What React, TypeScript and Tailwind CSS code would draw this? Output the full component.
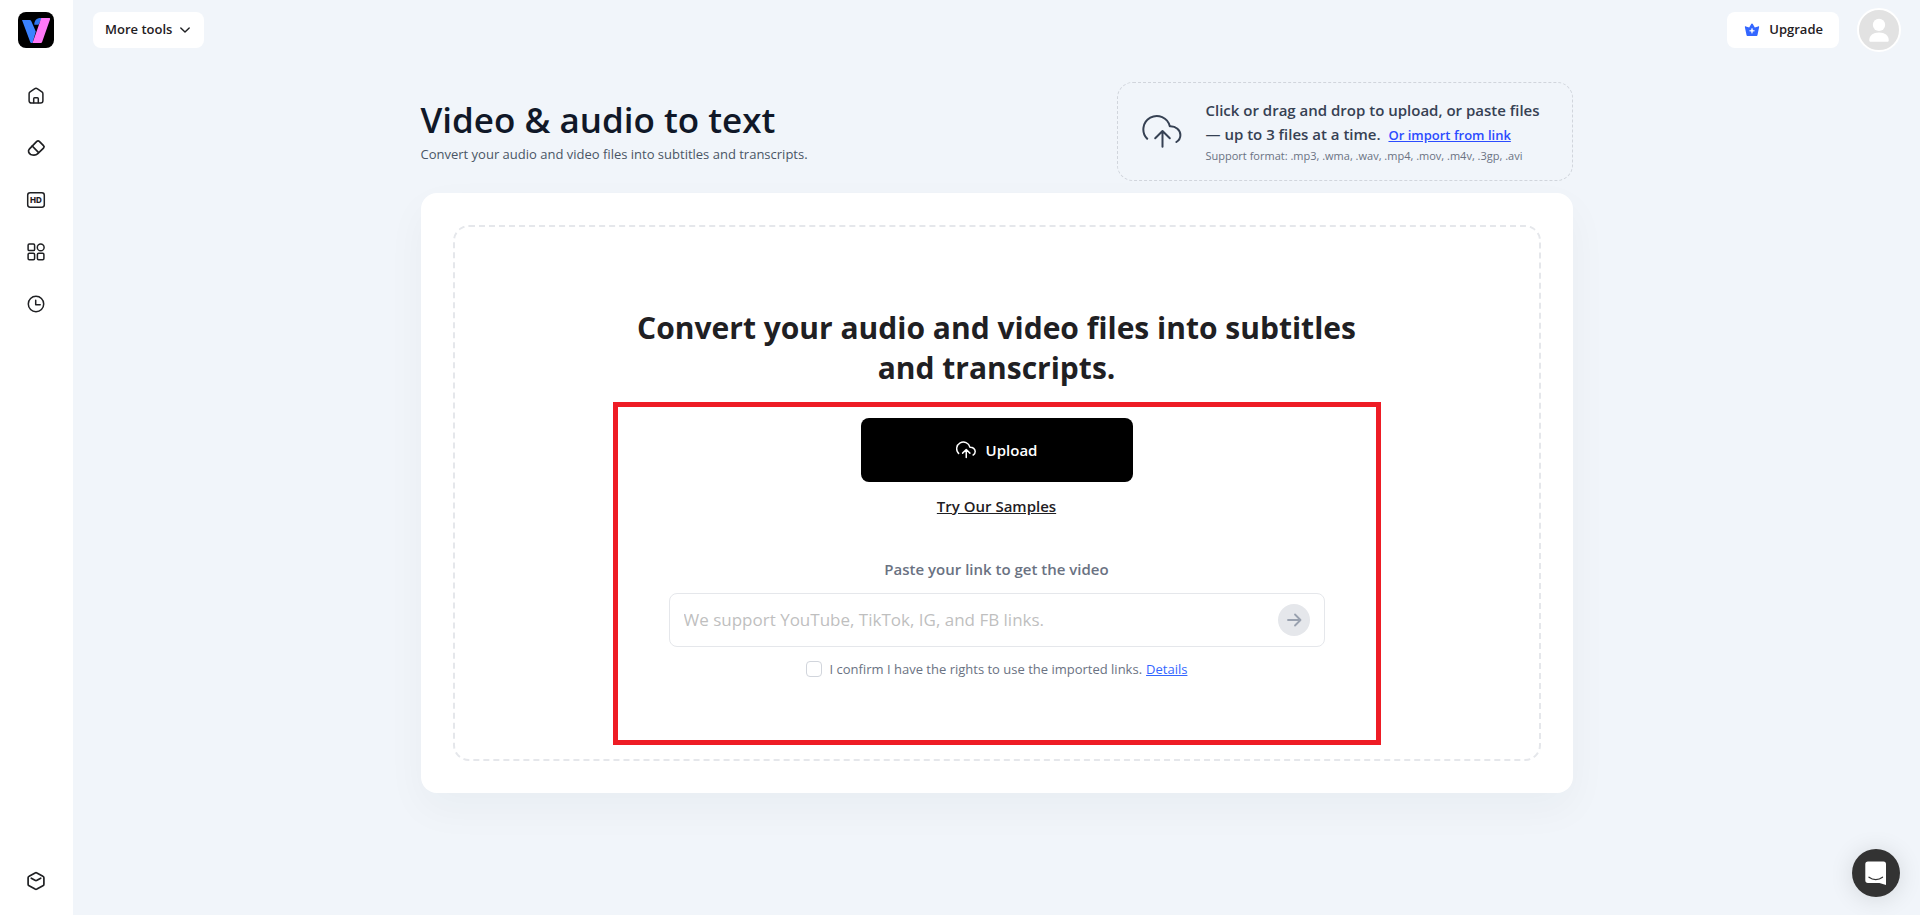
import type { ReactNode } from "react";

function Icon({ children, className = "size-5" }: { children: ReactNode; className?: string }) {
  return (
    <svg
      viewBox="0 0 20 20"
      fill="none"
      stroke="currentColor"
      strokeWidth="1.5"
      strokeLinecap="round"
      strokeLinejoin="round"
      className={className}
      aria-hidden="true"
    >
      {children}
    </svg>
  );
}

function CloudUpload({ className, stroke }: { className: string; stroke: number }) {
  return (
    <svg
      viewBox="0 0 40 40"
      fill="none"
      stroke="currentColor"
      strokeWidth={stroke}
      strokeLinecap="round"
      strokeLinejoin="round"
      className={className}
      aria-hidden="true"
    >
      <path d="M5.2 26.8A13.4 13.4 0 1 1 27.8 14.3C34 14 38.4 18 38.4 23C38.4 26 37 28.4 34.4 30" />
      <path d="M20.5 34.8V19M13.2 26.3l7.3-7.3 7.3 7.3" />
    </svg>
  );
}

function Logo() {
  return (
    <svg viewBox="0 0 36 36" className="size-9" aria-hidden="true">
      <rect width="36" height="36" rx="8" fill="#000" />
      <path d="M4 8h7.6c.8 0 1.3.3 1.6 1l4.6 10.5L14.5 31h-1.2c-.5 0-.8-.3-1-.7z" fill="#3b82ff" />
      <path d="M24 6.1 20.5 12.8h-4.2c0-4 2.2-6.7 6.4-6.7z" fill="#2f74f0" />
      <path d="M23.3 6H31c1 0 1.4.6 1 1.5l-7.8 22.3c-.3.8-.8 1.2-1.7 1.2h-8z" fill="#ff78f8" />
    </svg>
  );
}

const NAV = [
  {
    label: "Home",
    icon: (
      <>
        <path d="M3.1 7.8c0-.8.3-1.4 1-1.9l4.4-3.1c.9-.6 2.1-.6 3 0l4.4 3.1c.7.5 1 1.1 1 1.9v6.9c0 1.4-.9 2.3-2.3 2.3H5.4c-1.4 0-2.3-.9-2.3-2.3z" />
        <path d="M7.7 16.8v-4.1c0-.6.3-.9.9-.9h2.8c.6 0 .9.3.9.9v4.1" />
      </>
    ),
  },
  {
    label: "Eraser",
    icon: (
      <>
        <path
          d="M10.8 3.4c.8-.8 1.8-.8 2.5 0l4.2 4.2c.8.8.8 1.7 0 2.5l-5.7 5.5c-1.9 1.9-5.1 1.6-7.1.9-1.9-1-3.2-3.6-1.2-5.6z"
          strokeWidth="1.7"
        />
        <path d="m6.2 8 6.2 6.4" strokeWidth="1.7" />
      </>
    ),
  },
  {
    label: "HD enhance",
    icon: (
      <>
        <rect x="1.7" y="2.8" width="16.6" height="14.4" rx="2.4" />
        <text
          x="10"
          y="12.8"
          textAnchor="middle"
          fontSize="8"
          fontWeight="800"
          fill="currentColor"
          stroke="none"
          fontFamily="Inter, sans-serif"
        >
          HD
        </text>
      </>
    ),
  },
  {
    label: "All tools",
    icon: (
      <>
        <rect x="2.1" y="2.1" width="6.5" height="6.5" rx="1.2" />
        <circle cx="14.7" cy="5.4" r="3.4" />
        <rect x="2.1" y="11.3" width="6.5" height="6.5" rx="1.2" />
        <rect x="11.4" y="11.3" width="6.5" height="6.5" rx="1.2" />
      </>
    ),
  },
  {
    label: "History",
    icon: (
      <>
        <circle cx="10" cy="10" r="7.7" />
        <path d="M9.7 6.2v4.5h4.5" />
      </>
    ),
  },
];

function Sidebar() {
  return (
    <aside className="flex w-[73px] shrink-0 flex-col items-center bg-white pt-3 pr-px pb-6 text-[#1f2023]">
      <a href="#" aria-label="Dashboard">
        <Logo />
      </a>
      <nav className="mt-[38px] flex flex-col gap-8">
        {NAV.map((item) => (
          <a key={item.label} href="#" aria-label={item.label}>
            <Icon>{item.icon}</Icon>
          </a>
        ))}
      </nav>
      <a href="#" aria-label="Assets" className="mt-auto">
        <Icon>
          <path
            d="M9.1 1.9c.6-.3 1.2-.3 1.8 0l6 3.3c.6.3 1 .9 1 1.6v6.4c0 .7-.4 1.3-1 1.6l-6 3.3c-.6.3-1.2.3-1.8 0l-6-3.3c-.6-.3-1-.9-1-1.6V6.8c0-.7.4-1.3 1-1.6z"
            strokeWidth="1.7"
          />
          <path d="M5.3 7.2 9 9.3c.7.4 1.3.4 2 0l3.7-2.1" strokeWidth="1.7" />
        </Icon>
      </a>
    </aside>
  );
}

function TopBar() {
  return (
    <header className="flex items-center justify-between pt-2 pr-[19px] pl-5">
      <button className="flex h-9 items-center gap-1.5 rounded-lg bg-white px-3 text-[13px] font-semibold">
        More tools
        <Icon className="size-3.5">
          <path d="m4 7 6 6 6-6" strokeWidth="2" />
        </Icon>
      </button>
      <div className="flex items-center gap-[18px]">
        <button className="flex h-9 items-center gap-2 rounded-lg bg-white px-4 text-[13px] font-semibold">
          <svg viewBox="0 0 18 18" className="size-[18px]" aria-hidden="true">
            <path
              d="M9 2.4c.4 0 .6.2.8.6l2 3.5 3.3-1.1c.8-.2 1.2.2 1 .9l-1.6 7.7c-.1.7-.6 1-1.2 1H4.7c-.6 0-1.1-.3-1.2-1L1.9 6.3c-.2-.7.2-1.1 1-.9l3.3 1.1 2-3.5c.2-.4.4-.6.8-.6z"
              fill="#3366ff"
            />
            <path
              d="M9 7.2c.4 1.7.9 2.2 2.6 2.6C9.9 10.2 9.4 10.7 9 12.4c-.4-1.7-.9-2.2-2.6-2.6C8.1 9.4 8.6 8.9 9 7.2z"
              fill="#fff"
              stroke="#fff"
              strokeWidth="0.5"
            />
          </svg>
          Upgrade
        </button>
        <button aria-label="Account" className="size-11 overflow-hidden rounded-full border-2 border-white bg-[#e2e2e2]">
          <svg viewBox="0 0 39 39" className="size-full" fill="#fff" aria-hidden="true">
            <circle cx="19.5" cy="14.5" r="6" />
            <path d="M10 29.5c0-4.7 3.8-7.5 9.5-7.5s9.5 2.8 9.5 7.5c0 1-.6 1.5-1.5 1.5h-16c-.9 0-1.5-.5-1.5-1.5z" />
          </svg>
        </button>
      </div>
    </header>
  );
}

function DropBox() {
  return (
    <div className="flex w-[456px] items-center rounded-2xl border border-dashed border-gray-300 py-[15px] pr-4 pl-6 text-gray-700">
      <CloudUpload className="size-10 shrink-0" stroke={2} />
      <div className="ml-6">
        <p className="text-[15px] leading-6 font-semibold">
          Click or drag and drop to upload, or paste files
          <br />— up to 3 files at a time.{" "}
          <a href="#" className="ml-1 text-[13px] text-[#2b4bff] underline">
            Or import from link
          </a>
        </p>
        <p className="text-[11px] leading-[18px] text-gray-500">
          Support format: .mp3, .wma, .wav, .mp4, .mov, .m4v, .3gp, .avi
        </p>
      </div>
    </div>
  );
}

function LinkForm() {
  return (
    <form className="mt-[39px] flex w-full max-w-[656px] flex-col items-center">
      <label htmlFor="link" className="text-[15px] leading-6 font-semibold text-gray-500">
        Paste your link to get the video
      </label>
      <div className="mt-3 flex h-[54px] w-full items-center rounded-lg border border-gray-200 px-3.5">
        <input
          id="link"
          type="text"
          placeholder="We support YouTube, TikTok, IG, and FB links."
          className="min-w-0 flex-1 text-[17px] outline-none placeholder:text-[#bfbfbf]"
        />
        <button
          type="button"
          aria-label="Import"
          className="flex size-8 items-center justify-center rounded-full bg-gray-200 text-gray-400"
        >
          <Icon>
            <path d="M4 10h12.5M11 4.5l5.5 5.5-5.5 5.5" strokeWidth="1.8" />
          </Icon>
        </button>
      </div>
      <div className="mt-3 flex items-center text-[13px] leading-5 text-gray-500">
        <input
          id="rights"
          type="checkbox"
          className="mr-2 size-4 appearance-none rounded border border-gray-300 bg-white checked:bg-blue-600"
        />
        <label htmlFor="rights">I confirm I have the rights to use the imported links.</label>
        <a href="#" className="ml-1 text-[#3366ff] underline">
          Details
        </a>
      </div>
    </form>
  );
}

export default function App() {
  return (
    <div className="flex min-h-screen bg-[#f1f5fa] font-['Open_Sans','Noto_Sans',sans-serif] text-[#1f2023]">
      <Sidebar />
      <div className="min-w-0 flex-1">
        <TopBar />
        <main className="mx-auto mt-[30px] w-full max-w-6xl">
          <div className="flex items-center justify-between">
            <div>
              <h1 className="text-[35px] leading-10 font-semibold text-gray-900">Video &amp; audio to text</h1>
              <p className="mt-1 text-[13px] leading-5 text-gray-600">
                Convert your audio and video files into subtitles and transcripts.
              </p>
            </div>
            <DropBox />
          </div>

          <section className="mt-3 rounded-2xl bg-white p-8 shadow-[0_16px_40px_rgba(31,41,55,0.04)]">
            <div className="flex flex-col items-center rounded-2xl border-2 border-dashed border-gray-200 pt-[81px] pb-3.5">
              <h2 className="max-w-3xl text-center text-[30px] leading-10 font-bold">
                Convert your audio and video files into subtitles
                <br />
                and transcripts.
              </h2>
              <div className="mt-3.5 flex w-full max-w-[768px] flex-col items-center border-[5px] border-[#ee1c25] pt-[11px] pb-[61px]">
                <button className="flex h-16 w-[272px] items-center justify-center gap-2.5 rounded-lg bg-black text-[15px] font-semibold text-white">
                  <CloudUpload className="size-5" stroke={3} />
                  Upload
                </button>
                <a href="#" className="mt-3 text-[15px] leading-6 font-semibold underline">
                  Try Our Samples
                </a>
                <LinkForm />
              </div>
            </div>
          </section>
        </main>
      </div>

      <button
        aria-label="Open chat"
        className="fixed right-5 bottom-[18px] flex size-12 items-center justify-center rounded-full bg-[#333] shadow-[0_2px_24px_rgba(0,0,0,0.12)]"
      >
        <svg viewBox="0 0 24 26" className="h-[26px] w-6" aria-hidden="true">
          <path d="M4 1.5h15.5c1.7 0 2.5.9 2.5 2.5v21l-6.5-2H4c-1.7 0-2.7-1-2.7-2.7V4.2C1.3 2.5 2.3 1.5 4 1.5z" fill="#fff" />
          <path d="M5 17.2c4 3.1 9.5 3.1 13.5 0" fill="none" stroke="#333" strokeWidth="1.3" strokeLinecap="round" />
        </svg>
      </button>
    </div>
  );
}
